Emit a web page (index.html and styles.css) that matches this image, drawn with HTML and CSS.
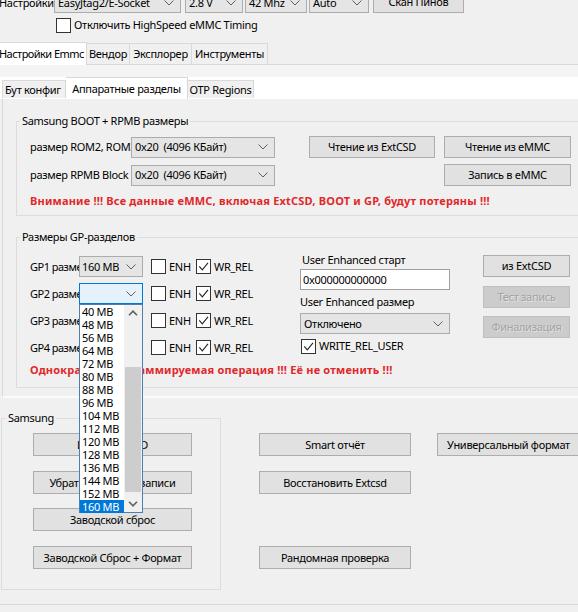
FILE: index.html
```html
<!DOCTYPE html>
<html>
<head>
<meta charset="utf-8">
<link rel="stylesheet" href="styles.css">
</head>
<body>
<div class="app">
  <div class="toprow">
    <span class="toplabel">Настройки</span>
    <div class="combo c-jtag"><span>EasyJtag2/E-Socket</span><svg class="chev" viewBox="0 0 10 6"><path d="M0.5 0.5 L5 5 L9.5 0.5" fill="none" stroke="#606060" stroke-width="1"/></svg></div>
    <div class="combo c-volt"><span>2.8 V</span><svg class="chev" viewBox="0 0 10 6"><path d="M0.5 0.5 L5 5 L9.5 0.5" fill="none" stroke="#606060" stroke-width="1"/></svg></div>
    <div class="combo c-mhz"><span>42 Mhz</span><svg class="chev" viewBox="0 0 10 6"><path d="M0.5 0.5 L5 5 L9.5 0.5" fill="none" stroke="#606060" stroke-width="1"/></svg></div>
    <div class="combo c-auto"><span>Auto</span><svg class="chev" viewBox="0 0 10 6"><path d="M0.5 0.5 L5 5 L9.5 0.5" fill="none" stroke="#606060" stroke-width="1"/></svg></div>
    <div class="btn b-scan">Скан Пинов</div>
  </div>

  <div class="hsrow">
    <span class="chk"><span class="box"></span><span>Отключить HighSpeed eMMC Timing</span></span>
  </div>

  <div class="tabs maintabs">
    <div class="tab sel t1">Настройки Emmc</div>
    <div class="tab t2">Вендор</div>
    <div class="tab t3">Эксплорер</div>
    <div class="tab t4">Инструменты</div>
  </div>

  <div class="outer">
    <div class="band"></div>
    <div class="tabs innertabs">
      <div class="tab i1">Бут конфиг</div>
      <div class="tab sel i2">Аппаратные разделы</div>
      <div class="tab i3">OTP Regions</div>
    </div>

    <div class="inner">
      <div class="group g-boot">
        <div class="legend">Samsung BOOT + RPMB размеры</div>
        <div class="gbody">
          <div class="brow r1">
            <span class="lbl lb-boot">размер ROM2, ROM3</span>
            <div class="combo c-boot"><span class="pre">0x20  (4096 КБайт)</span><svg class="chev" viewBox="0 0 10 6"><path d="M0.5 0.5 L5 5 L9.5 0.5" fill="none" stroke="#606060" stroke-width="1"/></svg></div>
            <div class="btn b-rext">Чтение из ExtCSD</div>
            <div class="btn b-remmc">Чтение из eMMC</div>
          </div>
          <div class="brow r2">
            <span class="lbl lb-boot">размер RPMB Block</span>
            <div class="combo c-boot"><span class="pre">0x20  (4096 КБайт)</span><svg class="chev" viewBox="0 0 10 6"><path d="M0.5 0.5 L5 5 L9.5 0.5" fill="none" stroke="#606060" stroke-width="1"/></svg></div>
            <div class="btn b-wemmc">Запись в eMMC</div>
          </div>
          <div class="warn w1">Внимание !!! Все данные eMMC, включая ExtCSD, BOOT и GP, будут потеряны !!!</div>
        </div>
      </div>

      <div class="group g-gp">
        <div class="legend">Размеры GP-разделов</div>
        <div class="gbody">
          <div class="gpcols">
            <div class="gpleft">
              <div class="gprow">
                <span class="lbl lb-gp">GP1 размер</span>
                <div class="combo c-gp"><span>160 MB</span><svg class="chev" viewBox="0 0 10 6"><path d="M0.5 0.5 L5 5 L9.5 0.5" fill="none" stroke="#606060" stroke-width="1"/></svg></div>
                <span class="chk enh"><span class="box"></span><span>ENH</span></span>
                <span class="chk"><span class="box"><svg viewBox="0 0 13 13"><path d="M2.3 6.3 L5.3 9.8 L11 2.8" fill="none" stroke="#222" stroke-width="1.1"/></svg></span><span>WR_REL</span></span>
              </div>
              <div class="gprow">
                <span class="lbl lb-gp">GP2 размер</span>
                <div class="cwrap">
                  <div class="combo c-gp focus"><span></span><svg class="chev" viewBox="0 0 10 6"><path d="M0.5 0.5 L5 5 L9.5 0.5" fill="none" stroke="#606060" stroke-width="1"/></svg></div>
                  <div class="droplist">
                    <div class="items">
                      <div class="it">40 MB</div>
                      <div class="it">48 MB</div>
                      <div class="it">56 MB</div>
                      <div class="it">64 MB</div>
                      <div class="it">72 MB</div>
                      <div class="it">80 MB</div>
                      <div class="it">88 MB</div>
                      <div class="it">96 MB</div>
                      <div class="it">104 MB</div>
                      <div class="it">112 MB</div>
                      <div class="it">120 MB</div>
                      <div class="it">128 MB</div>
                      <div class="it">136 MB</div>
                      <div class="it">144 MB</div>
                      <div class="it">152 MB</div>
                      <div class="it hl">160 MB</div>
                    </div>
                    <div class="sbar">
                      <svg class="sarrow" viewBox="0 0 10 6"><path d="M1 5.2 L5 1.2 L9 5.2" fill="none" stroke="#606060" stroke-width="1.6"/></svg>
                      <div class="strack"><div class="sthumb"></div></div>
                      <svg class="sarrow" viewBox="0 0 10 6"><path d="M1 0.8 L5 4.8 L9 0.8" fill="none" stroke="#606060" stroke-width="1.6"/></svg>
                    </div>
                  </div>
                </div>
                <span class="chk enh"><span class="box"></span><span>ENH</span></span>
                <span class="chk"><span class="box"><svg viewBox="0 0 13 13"><path d="M2.3 6.3 L5.3 9.8 L11 2.8" fill="none" stroke="#222" stroke-width="1.1"/></svg></span><span>WR_REL</span></span>
              </div>
              <div class="gprow">
                <span class="lbl lb-gp">GP3 размер</span>
                <div class="combo c-gp"><span>160 MB</span><svg class="chev" viewBox="0 0 10 6"><path d="M0.5 0.5 L5 5 L9.5 0.5" fill="none" stroke="#606060" stroke-width="1"/></svg></div>
                <span class="chk enh"><span class="box"></span><span>ENH</span></span>
                <span class="chk"><span class="box"><svg viewBox="0 0 13 13"><path d="M2.3 6.3 L5.3 9.8 L11 2.8" fill="none" stroke="#222" stroke-width="1.1"/></svg></span><span>WR_REL</span></span>
              </div>
              <div class="gprow">
                <span class="lbl lb-gp">GP4 размер</span>
                <div class="combo c-gp"><span>160 MB</span><svg class="chev" viewBox="0 0 10 6"><path d="M0.5 0.5 L5 5 L9.5 0.5" fill="none" stroke="#606060" stroke-width="1"/></svg></div>
                <span class="chk enh"><span class="box"></span><span>ENH</span></span>
                <span class="chk"><span class="box"><svg viewBox="0 0 13 13"><path d="M2.3 6.3 L5.3 9.8 L11 2.8" fill="none" stroke="#222" stroke-width="1.1"/></svg></span><span>WR_REL</span></span>
              </div>
            </div>

            <div class="gpmid">
              <div class="mlabel ml1">User Enhanced старт</div>
              <div class="tbox">0x000000000000</div>
              <div class="mlabel ml2">User Enhanced размер</div>
              <div class="combo c-ue"><span>Отключено</span><svg class="chev" viewBox="0 0 10 6"><path d="M0.5 0.5 L5 5 L9.5 0.5" fill="none" stroke="#606060" stroke-width="1"/></svg></div>
              <span class="chk wru"><span class="box"><svg viewBox="0 0 13 13"><path d="M2.3 6.3 L5.3 9.8 L11 2.8" fill="none" stroke="#222" stroke-width="1.1"/></svg></span><span>WRITE_REL_USER</span></span>
            </div>

            <div class="gpright">
              <div class="btn b-gp1">из ExtCSD</div>
              <div class="btn dis b-gp2">Тест запись</div>
              <div class="btn dis b-gp3">Финализация</div>
            </div>
          </div>
          <div class="warn w2">Однократно программируемая операция !!! Её не отменить !!!</div>
        </div>
      </div>
    </div>

    <div class="samsung">
      <div class="group g-sam">
        <div class="legend">Samsung</div>
        <div class="gbody">
          <div class="btn sb s1">Изменить CID</div>
          <div class="btn sb s2">Убрать защиту от записи</div>
          <div class="btn sb s3">Заводской сброс</div>
          <div class="btn sb s4">Заводской Сброс + Формат</div>
        </div>
      </div>
      <div class="scol2">
        <div class="btn mb">Smart отчёт</div>
        <div class="btn mb s2">Восстановить Extcsd</div>
        <div class="btn mb s4b">Рандомная проверка</div>
      </div>
      <div class="scol3">
        <div class="btn ub">Универсальный формат</div>
      </div>
    </div>
  </div>
</div>
</body>
</html>
```

FILE: styles.css
```css
* { box-sizing: border-box; }
html, body { margin: 0; padding: 0; }
body {
  width: 578px;
  height: 612px;
  overflow: hidden;
  background: #f0f0f0;
  font-family: "Noto Sans", "Segoe UI", sans-serif;
  font-size: 11px;
  line-height: 16px;
  letter-spacing: -0.3px;
  color: #000;
}
.app { width: 640px; }

/* generic controls */
.combo {
  display: flex;
  align-items: center;
  justify-content: space-between;
  height: 21px;
  background: #e5e5e5;
  border: 1px solid #acacac;
  padding: 0 6px 0 3px;
  white-space: nowrap;
  overflow: hidden;
  flex: none;
}
.combo .chev { width: 10px; height: 6px; flex: none; }
.pre { white-space: pre; }
.btn {
  display: flex;
  align-items: center;
  justify-content: center;
  height: 22px;
  background: #e1e1e1;
  border: 1px solid #adadad;
  white-space: nowrap;
  overflow: hidden;
  flex: none;
}
.btn.dis {
  background: #cccccc;
  border-color: #bfbfbf;
  color: #a3a3a3;
  text-shadow: 1px 1px 0 #e2e2e2;
}
.chk { display: inline-flex; align-items: center; gap: 3px; white-space: nowrap; flex: none; }
.chk .box {
  width: 15px; height: 15px;
  background: #fff;
  border: 1px solid #333;
  display: flex; align-items: center; justify-content: center;
  flex: none;
}
.chk .box svg { width: 13px; height: 13px; }
.lbl { white-space: nowrap; overflow: hidden; flex: none; }

/* top row */
.toprow { display: flex; align-items: flex-end; height: 22px; margin-top: -9px; }
.toplabel { width: 55px; margin-left: -1px; flex: none; margin-bottom: 2px; }
.c-jtag { width: 127px; }
.c-volt { width: 58px; margin-left: 4px; }
.c-mhz { width: 62px; margin-left: 2px; }
.c-auto { width: 60px; margin-left: 2px; }
.b-scan { width: 91px; margin-left: 4px; }

.hsrow { height: 16px; margin-top: 4px; padding-left: 56px; display: flex; align-items: center; }

/* tabs */
.tabs { display: flex; align-items: flex-end; position: relative; z-index: 1; }
.tab {
  display: flex; align-items: center; justify-content: center;
  background: #f0f0f0;
  border: 1px solid #d9d9d9;
  border-bottom: none;
  white-space: nowrap;
  overflow: hidden;
  flex: none;
}
.tab.sel { background: #fff; }
.maintabs { height: 23px; margin-top: 9px; margin-bottom: -1px; }
.maintabs .tab { height: 21px; margin-bottom: 1px; }
.maintabs .tab.sel { height: 23px; margin-bottom: 0; }
.t1 { width: 89px; margin-left: -2px; justify-content: flex-start; padding-left: 0; letter-spacing: -0.55px; }
.t2 { width: 43px; border-left: none; }
.t3 { width: 62px; border-left: none; }
.t4 { width: 76px; border-left: none; }

.outer {
  border-top: 1px solid #d9d9d9;
  border-bottom: 1px solid #d9d9d9;
  padding-bottom: 14px;
}
.band { height: 12px; background: #f4f4f4; }
.innertabs { height: 22px; margin-bottom: -1px; background: #fff; padding-left: 2px; }
.innertabs .tab { height: 18px; margin-bottom: 1px; }
.innertabs .tab.sel { height: 22px; margin-bottom: 0; }
.i1 { width: 64px; justify-content: flex-start; padding-left: 2px; }
.i2 { width: 122px; border-left: none; }
.i3 { width: 66px; border-left: none; }

.inner {
  margin-left: 2px;
  border-top: 1px solid #d9d9d9;
  border-left: 1px solid #d9d9d9;
  border-bottom: 2px solid #fbfbfb;
  padding-bottom: 8px;
}

/* group boxes */
.group { border: 1px solid #dcdcdc; }
.legend {
  display: table;
  margin: -9px 0 0 3px;
  padding: 0 2px;
  background: #f0f0f0;
  height: 16px;
}
.g-boot { margin: 22px 0 0 13px; padding-bottom: 6px; }
.g-gp { margin: 21px 0 0 13px; padding-bottom: 9px; }
.g-boot .gbody, .g-gp .gbody { padding-left: 13px; }

.brow { display: flex; align-items: center; height: 22px; }
.r1 { margin-top: 7px; }
.r2 { margin-top: 6px; }
.lb-boot { width: 101px; }
.c-boot { width: 144px; }
.b-rext { width: 126px; margin-left: 34px; }
.b-remmc { width: 127px; margin-left: 9px; }
.b-wemmc { width: 127px; margin-left: 169px; }

.warn { color: #e0282a; font-weight: bold; white-space: nowrap; height: 16px; letter-spacing: 0.2px; }
.w1 { margin-top: 7px; }
.w2 { margin-top: 4px; }

.gpcols { display: flex; align-items: flex-start; }
.gpleft { width: 270px; margin-top: 11px; display: flex; flex-direction: column; gap: 6px; }
.gprow { display: flex; align-items: center; height: 21px; }
.lb-gp { width: 49px; letter-spacing: -0.5px; }
.c-gp { width: 64px; padding-left: 2px; }
.c-gp.focus { background: #e5f1fb; border-color: #0078d7; }
.cwrap { position: relative; flex: none; }
.chk.enh { width: 45px; margin-left: 8px; }

.droplist {
  position: absolute;
  left: 0; top: 21px;
  width: 64px; height: 209px;
  background: #fff;
  border: 1px solid #4a7fb0;
  display: flex;
  z-index: 10;
}
.items { flex: 1; }
.it {
  height: 13px; line-height: 13px;
  padding-left: 2px;
  font-size: 11px;
  letter-spacing: -0.3px;
  white-space: nowrap;
}
.it.hl { background: #0078d7; color: #fff; }
.sbar { width: 18px; display: flex; flex-direction: column; align-items: center; background: #f0f0f0; }
.sarrow { width: 10px; height: 6px; margin: 5px 0; flex: none; }
.strack { flex: 1; width: 100%; padding: 46px 1px 4px 1px; }
.sthumb { height: 125px; background: #cdcdcd; }

.gpmid { width: 150px; margin-top: 7px; display: flex; flex-direction: column; align-items: flex-start; }
.mlabel { height: 16px; white-space: nowrap; }
.ml1 { padding-left: 2px; }
.tbox {
  width: 150px; height: 21px; margin-top: 1px;
  background: #fff; border: 1px solid #a0a0a0;
  padding-left: 2px; display: flex; align-items: center;
}
.ml2 { margin-top: 4px; }
.c-ue { width: 150px; margin-top: 3px; }
.chk.wru { margin-top: 4px; margin-left: 1px; }

.gpright { width: 87px; margin-left: 33px; margin-top: 10px; display: flex; flex-direction: column; }
.b-gp2 { margin-top: 9px; }
.b-gp3 { margin-top: 8px; }

/* samsung section */
.samsung { display: flex; align-items: flex-start; }
.g-sam { width: 220px; margin: 20px 0 0 1px; padding-bottom: 20px; }
.g-sam .legend { margin-left: 4px; }
.g-sam .gbody { padding-left: 31px; }
.sb { width: 159px; height: 23px; }
.s1 { margin-top: 7px; }
.s2 { margin-top: 15px; }
.s3 { margin-top: 14px; }
.s4 { margin-top: 15px; }
.scol2 { margin-left: 38px; margin-top: 35px; }
.mb { width: 152px; height: 23px; }
.s4b { margin-top: 52px; }
.scol3 { margin-left: 26px; margin-top: 35px; }
.ub { width: 143px; height: 23px; }
```
